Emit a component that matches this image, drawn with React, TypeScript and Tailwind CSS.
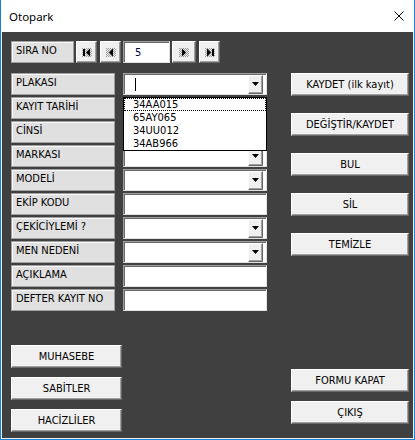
import React from "react";

const FONT =
  "[font-family:'DejaVu_Sans_Condensed','DejaVu_Sans',sans-serif] [font-stretch:condensed] text-[11px] leading-[13px] text-black";
const RAISED =
  "bg-[#f0f0f0] border border-t-white border-l-white border-b-[#696969] border-r-[#696969] shadow-[inset_-1px_-1px_0_#a0a0a0]";
const SUNKEN =
  "bg-white border border-t-[#a0a0a0] border-l-[#a0a0a0] border-b-[#e3e3e3] border-r-[#e3e3e3] shadow-[inset_1px_1px_0_#696969]";
const LABEL =
  "bg-[#e0e0e0] border border-[#a0a0a0] shadow-[inset_1px_1px_0_#fafafa] pl-[4px] pt-[2px]";

function Button({ text, w }: { text: string; w: string }) {
  return (
    <div className={`${RAISED} ${w} h-[23px] flex items-center justify-center`}>
      <span>{text}</span>
    </div>
  );
}

function DropBtn() {
  return (
    <div className={`${RAISED} ml-auto mr-[3px] w-[15px] h-[19px] flex items-center justify-center`}>
      <svg width="7" height="4" viewBox="0 0 7 4">
        <polygon points="0,0 7,0 3.5,4" fill="#000" />
      </svg>
    </div>
  );
}

function Checker() {
  return (
    <pattern id="chk" width="2" height="2" patternUnits="userSpaceOnUse">
      <rect x="0" y="0" width="1" height="1" fill="#9a9a9a" />
      <rect x="1" y="1" width="1" height="1" fill="#9a9a9a" />
    </pattern>
  );
}

function NavIcon({ kind }: { kind: "first" | "prev" | "next" | "last" }) {
  return (
    <svg width="10" height="9" viewBox="0 0 10 9">
      <defs>
        <Checker />
      </defs>
      <rect x="0" y="0" width="10" height="9" fill="url(#chk)" />
      {kind === "first" && (
        <>
          <rect x="1" y="1" width="2" height="7" fill="#000" />
          <polygon points="8,0.5 8,8.5 4,4.5" fill="#000" />
        </>
      )}
      {kind === "prev" && <polygon points="7,0.5 7,8.5 3,4.5" fill="#000" />}
      {kind === "next" && <polygon points="3,0.5 3,8.5 7,4.5" fill="#000" />}
      {kind === "last" && (
        <>
          <polygon points="2,0.5 2,8.5 6,4.5" fill="#000" />
          <rect x="7" y="1" width="2" height="7" fill="#000" />
        </>
      )}
    </svg>
  );
}

type Row = { label: string; combo?: boolean; caret?: boolean; list?: boolean };

const rows: Row[] = [
  { label: "PLAKASI", combo: true, caret: true, list: true },
  { label: "KAYIT TARİHİ" },
  { label: "CİNSİ" },
  { label: "MARKASI", combo: true },
  { label: "MODELİ", combo: true },
  { label: "EKİP KODU" },
  { label: "ÇEKİCİYLEMİ ?", combo: true },
  { label: "MEN NEDENİ", combo: true },
  { label: "AÇIKLAMA" },
  { label: "DEFTER KAYIT NO" },
];

const items = ["34AA015", "65AY065", "34UU012", "34AB966"];

export default function App() {
  return (
    <div
      className={`${FONT} w-[415px] h-[440px] flex flex-col border-x border-b border-[#1883d7] bg-white`}
    >
      {/* Title bar */}
      <div className="h-[32px] shrink-0 bg-white flex items-center justify-between">
        <span className="pl-[8px] pt-[1px] [font-family:'Noto_Sans',sans-serif] text-[11.5px] leading-[16px] text-black">
          Otopark
        </span>
        <svg width="10" height="10" viewBox="0 0 10 10" className="mr-[10px]">
          <path d="M0.5 0.5 L9.5 9.5 M9.5 0.5 L0.5 9.5" stroke="#000" strokeWidth="1" />
        </svg>
      </div>

      {/* Body */}
      <div className="flex-1 flex bg-[#404040] border-x border-b border-[#f0f0f0]">
        {/* Left section */}
        <div className="w-[265px] pl-[9px] pt-[9px] flex flex-col">
          {/* SIRA NO row */}
          <div className="flex h-[22px]">
            <div className={`${LABEL} w-[63px] h-[22px]`}>SIRA NO</div>
            <div className={`${RAISED} ml-[2px] w-[21px] h-[22px] flex items-center justify-center`}>
              <NavIcon kind="first" />
            </div>
            <div className={`${RAISED} ml-[3px] w-[21px] h-[22px] flex items-center justify-center`}>
              <NavIcon kind="prev" />
            </div>
            <div className={`${SUNKEN} ml-[2px] w-[47px] h-[22px] flex items-center pl-[11px] text-[#00003a]`}>
              5
            </div>
            <div className={`${RAISED} ml-[2px] w-[24px] h-[22px] flex items-center justify-center`}>
              <NavIcon kind="next" />
            </div>
            <div className={`${RAISED} ml-[3px] w-[21px] h-[22px] flex items-center justify-center`}>
              <NavIcon kind="last" />
            </div>
          </div>

          {/* Form rows */}
          <div className="mt-[10px] flex flex-col gap-[2px]">
            {rows.map((r) => (
              <div key={r.label} className="flex h-[22px]">
                <div className={`${LABEL} w-[104px] h-[22px] whitespace-nowrap`}>{r.label}</div>
                <div className={`${SUNKEN} relative ml-[8px] w-[144px] h-[22px] flex items-center`}>
                  {r.caret && <span className="ml-[11px] w-px h-[13px] bg-black" />}
                  {r.combo && <DropBtn />}
                  {r.list && (
                    <div className="absolute z-10 left-[-1px] top-[23px] w-[144px] bg-white border border-black flex flex-col">
                      {items.map((it, i) => (
                        <div
                          key={it}
                          className={
                            i === 0
                              ? "h-[13px] pl-[9px] leading-[13px] outline-1 outline-dotted outline-black -outline-offset-1"
                              : "h-[13px] pl-[9px] leading-[13px]"
                          }
                        >
                          {it}
                        </div>
                      ))}
                    </div>
                  )}
                </div>
              </div>
            ))}
          </div>

          {/* Bottom-left buttons */}
          <div className="mt-[34px] flex flex-col gap-[9px]">
            <Button text="MUHASEBE" w="w-[111px]" />
            <Button text="SABİTLER" w="w-[111px]" />
            <Button text="HACİZLİLER" w="w-[111px]" />
          </div>
        </div>

        {/* Right column */}
        <div className="ml-[24px] pt-[41px] flex flex-col">
          <div className="flex flex-col gap-[17px]">
            <Button text="KAYDET (ilk kayıt)" w="w-[118px]" />
            <Button text="DEĞİŞTİR/KAYDET" w="w-[118px]" />
            <Button text="BUL" w="w-[118px]" />
            <Button text="SİL" w="w-[118px]" />
            <Button text="TEMİZLE" w="w-[118px]" />
          </div>
          <div className="mt-[113px] flex flex-col gap-[9px]">
            <Button text="FORMU KAPAT" w="w-[118px]" />
            <Button text="ÇIKIŞ" w="w-[118px]" />
          </div>
        </div>
      </div>
    </div>
  );
}
